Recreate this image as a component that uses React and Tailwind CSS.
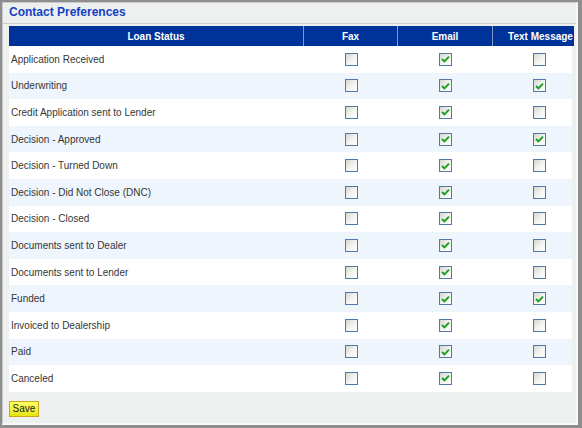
import React from 'react'

const ROWS = [
  { label: 'Application Received', fax: false, email: true, text: false },
  { label: 'Underwriting', fax: false, email: true, text: true },
  { label: 'Credit Application sent to Lender', fax: false, email: true, text: false },
  { label: 'Decision - Approved', fax: false, email: true, text: true },
  { label: 'Decision - Turned Down', fax: false, email: true, text: false },
  { label: 'Decision - Did Not Close (DNC)', fax: false, email: true, text: false },
  { label: 'Decision - Closed', fax: false, email: true, text: false },
  { label: 'Documents sent to Dealer', fax: false, email: true, text: false },
  { label: 'Documents sent to Lender', fax: false, email: true, text: false },
  { label: 'Funded', fax: false, email: true, text: true },
  { label: 'Invoiced to Dealership', fax: false, email: true, text: false },
  { label: 'Paid', fax: false, email: true, text: false },
  { label: 'Canceled', fax: false, email: true, text: false },
]

function Box({ checked }) {
  return (
    <span className="flex w-[13px] h-[13px] items-center justify-center border border-[#5478a3] bg-linear-to-br from-[#d6d6cf] via-[#f2f2ef] to-white">
      {checked && (
        <svg width="9" height="8" viewBox="0 0 9 8">
          <path d="M1 4 L3.4 6.4 L8 1.6" fill="none" stroke="#1c9c22" strokeWidth="2" />
        </svg>
      )}
    </span>
  )
}

export default function App() {
  return (
    <div className="w-[582px] h-[428px] box-border border-t-2 border-l-2 border-r-[4px] border-b-[3px] border-[#8e8e8e] font-['Liberation_Sans',Arial,sans-serif]">
      <div className="h-full box-border border-t border-l border-[#c9c9c9] border-r-2 border-b-2 border-r-[#f4f8fc] border-b-[#f4f8fc] bg-[#eef0f0] overflow-hidden">
        <div className="h-[21px] border-b border-[#cdcfcf] pl-[6px] pt-[2px] text-[12px] leading-[14px]">
          <span className="font-bold text-[#1441c4]">Contact Preferences</span>
        </div>
        <div className="ml-[6px] mt-[2px] w-[565px] overflow-hidden">
          <div className="flex w-[580px] h-[20px] bg-[#003399] text-white text-[10px] font-bold">
            <div className="w-[295px] border-r border-[#8597c8] flex items-center justify-center">Loan Status</div>
            <div className="w-[94px] border-r border-[#8597c8] flex items-center justify-center">Fax</div>
            <div className="w-[95px] border-r border-[#8597c8] flex items-center justify-center">Email</div>
            <div className="w-[95px] flex items-center justify-center whitespace-nowrap">Text Message</div>
          </div>
          <div className="w-[563px]">
            {ROWS.map((r, i) => (
              <div
                key={r.label}
                className={`flex h-[26.6px] items-center text-[10px] text-[#363636] ${i % 2 ? 'bg-[#eef5fd]' : 'bg-white'}`}
              >
                <div className="w-[295px] pl-[2px]">{r.label}</div>
                <div className="w-[94px] flex justify-center"><Box checked={r.fax} /></div>
                <div className="w-[95px] flex justify-center"><Box checked={r.email} /></div>
                <div className="w-[79px] flex justify-end pr-[26px]"><Box checked={r.text} /></div>
              </div>
            ))}
          </div>
        </div>
        <div className="flex pl-[6px] pt-[9px]">
          <button className="w-[30px] h-[16px] border border-[#c9a820] bg-linear-to-b from-[#ffff60] to-[#e6e600] text-[10px] leading-[14px] text-[#222] p-0">
            Save
          </button>
        </div>
      </div>
    </div>
  )
}
